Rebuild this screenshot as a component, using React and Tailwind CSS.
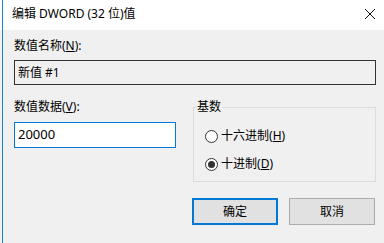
import React from "react";

const font = { fontFamily: '"Noto Sans", "Noto Sans CJK SC", sans-serif' };

const Radio = ({ checked, label, mnemonic, className }) => (
  <div className={"flex items-center gap-[3px] " + className}>
    <span className="w-[13px] h-[13px] rounded-full border border-[#333] bg-white flex items-center justify-center">
      {checked && <span className="w-[7px] h-[7px] rounded-full bg-[#333]" />}
    </span>
    <span className="text-[12px] leading-[16px] text-black">
      {label}(<span className="underline">{mnemonic}</span>)
    </span>
  </div>
);

export default function App() {
  return (
    <div className="relative w-[384px] h-[243px] bg-[#f0f0f0] overflow-hidden text-black" style={font}>
      <div className="absolute left-[2px] top-0 bottom-0 w-px bg-[#1883d7]" />

      {/* title bar */}
      <div className="h-[30px] bg-white flex items-start justify-between pl-[12px] pr-[8px] pt-[6px]">
        <span className="text-[12px] leading-[16px]">编辑 DWORD (32 位)值</span>
        <svg width="12" height="12" viewBox="0 0 12 12" className="mt-[2px]">
          <path d="M1 1 L11 11 M11 1 L1 11" stroke="#111" strokeWidth="1" fill="none" />
        </svg>
      </div>

      <div className="px-[14px] pr-[8px] flex flex-col">
        <div className="mt-[8px] text-[12px] leading-[16px]">
          数值名称(<span className="underline">N</span>):
        </div>
        <div className="mt-[6px] h-[25px] border border-[#333] bg-[#f0f0f0] px-[3px] flex items-center text-[12px]">
          新值 #1
        </div>

        <div className="flex mt-[14px]">
          <div className="flex flex-col w-[162px]">
            <div className="text-[12px] leading-[16px]">
              数值数据(<span className="underline">V</span>):
            </div>
            <div className="mt-[7px] h-[26px] border border-[#0078d7] bg-white px-[3px] flex items-center text-[13px]">
              20000
            </div>
          </div>

          <div className="ml-[17px] mt-[8px] relative flex-1 h-[75px] border border-[#dcdcdc] flex flex-col pl-[11px]">
            <span className="absolute -top-[9px] left-[2px] px-[1px] bg-[#f0f0f0] text-[12px] leading-[16px]">
              基数
            </span>
            <Radio label="十六进制" mnemonic="H" className="mt-[20px]" />
            <Radio checked label="十进制" mnemonic="D" className="mt-[12px]" />
          </div>
        </div>

        <div className="flex justify-end gap-[11px] mt-[16px] pr-[1px]">
          <button className="w-[86px] h-[27px] border-2 border-[#0078d7] bg-[#e1e1e1] text-[12px]">
            确定
          </button>
          <button className="w-[86px] h-[27px] border border-[#adadad] bg-[#e1e1e1] text-[12px]">
            取消
          </button>
        </div>
      </div>
    </div>
  );
}
